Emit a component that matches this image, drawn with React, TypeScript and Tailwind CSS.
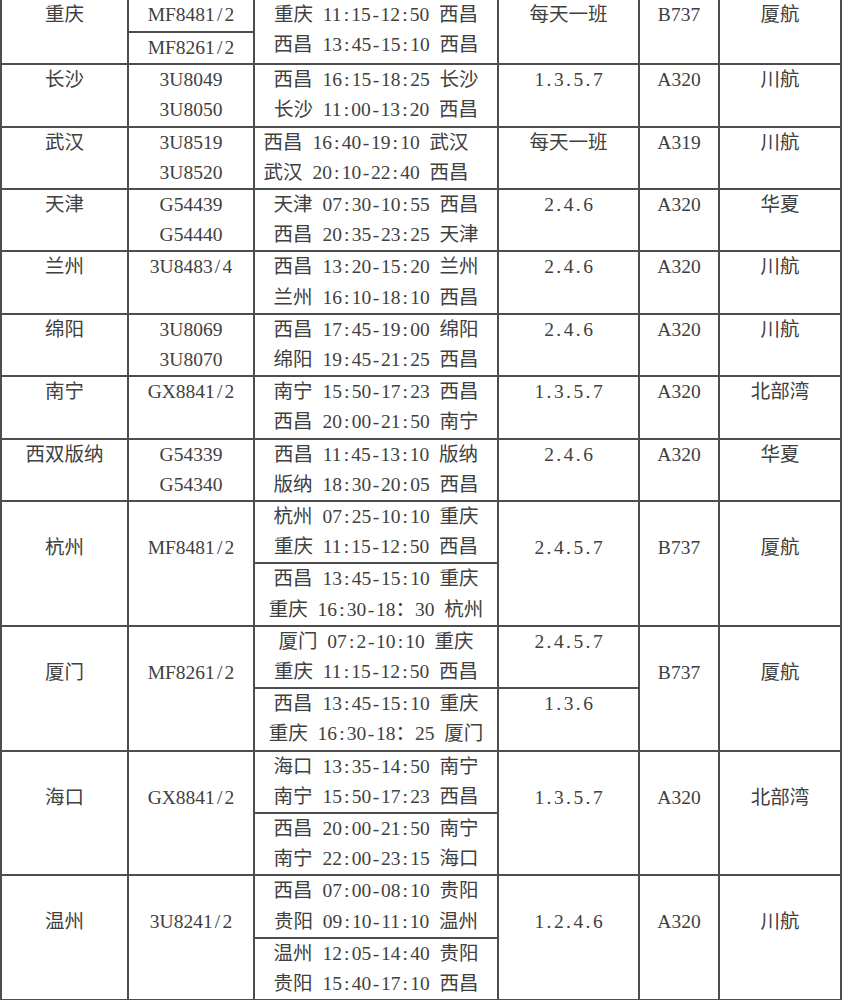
import React from "react";

type Simple = {
  city: string;
  codes: string[];
  route: string[];
  freq: string;
  plane: string;
  airline: string;
  shift?: boolean;
};

type Long = {
  city: string;
  code: string;
  legs: string[][];
  freq: string | string[];
  plane: string;
  airline: string;
};

const simpleRows: Simple[] = [
  {
    city: "长沙",
    codes: ["3U8049", "3U8050"],
    route: ["西昌 16:15-18:25 长沙", "长沙 11:00-13:20 西昌"],
    freq: "1.3.5.7",
    plane: "A320",
    airline: "川航",
  },
  {
    city: "武汉",
    codes: ["3U8519", "3U8520"],
    route: ["西昌 16:40-19:10 武汉", "武汉 20:10-22:40 西昌"],
    freq: "每天一班",
    plane: "A319",
    airline: "川航",
    shift: true,
  },
  {
    city: "天津",
    codes: ["G54439", "G54440"],
    route: ["天津 07:30-10:55 西昌", "西昌 20:35-23:25 天津"],
    freq: "2.4.6",
    plane: "A320",
    airline: "华夏",
  },
  {
    city: "兰州",
    codes: ["3U8483/4"],
    route: ["西昌 13:20-15:20 兰州", "兰州 16:10-18:10 西昌"],
    freq: "2.4.6",
    plane: "A320",
    airline: "川航",
  },
  {
    city: "绵阳",
    codes: ["3U8069", "3U8070"],
    route: ["西昌 17:45-19:00 绵阳", "绵阳 19:45-21:25 西昌"],
    freq: "2.4.6",
    plane: "A320",
    airline: "川航",
  },
  {
    city: "南宁",
    codes: ["GX8841/2"],
    route: ["南宁 15:50-17:23 西昌", "西昌 20:00-21:50 南宁"],
    freq: "1.3.5.7",
    plane: "A320",
    airline: "北部湾",
  },
  {
    city: "西双版纳",
    codes: ["G54339", "G54340"],
    route: ["西昌 11:45-13:10 版纳", "版纳 18:30-20:05 西昌"],
    freq: "2.4.6",
    plane: "A320",
    airline: "华夏",
  },
];

const longRows: Long[] = [
  {
    city: "杭州",
    code: "MF8481/2",
    legs: [
      ["杭州 07:25-10:10 重庆", "重庆 11:15-12:50 西昌"],
      ["西昌 13:45-15:10 重庆", "重庆 16:30-18：30 杭州"],
    ],
    freq: "2.4.5.7",
    plane: "B737",
    airline: "厦航",
  },
  {
    city: "厦门",
    code: "MF8261/2",
    legs: [
      ["厦门 07:2-10:10 重庆", "重庆 11:15-12:50 西昌"],
      ["西昌 13:45-15:10 重庆", "重庆 16:30-18：25 厦门"],
    ],
    freq: ["2.4.5.7", "1.3.6"],
    plane: "B737",
    airline: "厦航",
  },
  {
    city: "海口",
    code: "GX8841/2",
    legs: [
      ["海口 13:35-14:50 南宁", "南宁 15:50-17:23 西昌"],
      ["西昌 20:00-21:50 南宁", "南宁 22:00-23:15 海口"],
    ],
    freq: "1.3.5.7",
    plane: "A320",
    airline: "北部湾",
  },
  {
    city: "温州",
    code: "3U8241/2",
    legs: [
      ["西昌 07:00-08:10 贵阳", "贵阳 09:10-11:10 温州"],
      ["温州 12:05-14:40 贵阳", "贵阳 15:40-17:10 西昌"],
    ],
    freq: "1.2.4.6",
    plane: "A320",
    airline: "川航",
  },
];

// punctuation gets a fixed half-width box, like the Song typeface in the scan
const HALF = " :.-/";

function T({ s }: { s: string }) {
  return (
    <>
      {Array.from(s).map((c, i) =>
        HALF.includes(c) ? (
          <span key={i} className="inline-block w-[0.5em] text-center">
            {c === " " ? "\u00a0" : c}
          </span>
        ) : (
          <React.Fragment key={i}>{c}</React.Fragment>
        )
      )}
    </>
  );
}

function Lines({ lines }: { lines: string[] }) {
  return (
    <>
      {lines.map((l) => (
        <div key={l} className="whitespace-nowrap">
          <T s={l} />
        </div>
      ))}
    </>
  );
}

const cell = "border-2 border-[#4d4d4d] p-0 align-top text-center";
const mid = cell + " pt-[31px]";

export default function App() {
  return (
    <div className="min-h-screen bg-white">
      <table className="-mt-[2px] w-[840px] table-fixed border-collapse font-['Liberation_Serif','Noto_Sans_CJK_SC',serif] text-[19.5px] leading-[30.2px] text-[#404040]">
        <colgroup>
          <col className="w-[127px]" />
          <col className="w-[126px]" />
          <col className="w-[244px]" />
          <col className="w-[141px]" />
          <col className="w-[80px]" />
          <col className="w-[122px]" />
        </colgroup>
        <tbody>
          <tr className="h-[33px]">
            <td rowSpan={2} className={cell}>
              重庆
            </td>
            <td className={cell}>
              <T s="MF8481/2" />
            </td>
            <td rowSpan={2} className={cell}>
              <Lines lines={["重庆 11:15-12:50 西昌", "西昌 13:45-15:10 西昌"]} />
            </td>
            <td rowSpan={2} className={cell}>
              每天一班
            </td>
            <td rowSpan={2} className={cell}>
              <T s="B737" />
            </td>
            <td rowSpan={2} className={cell}>
              厦航
            </td>
          </tr>
          <tr className="h-[30.4px]">
            <td className={cell}>
              <T s="MF8261/2" />
            </td>
          </tr>

          {simpleRows.map((r) => (
            <tr key={r.city} className="h-[62.4px]">
              <td className={cell}>{r.city}</td>
              <td className={cell}>
                <Lines lines={r.codes} />
              </td>
              <td className={cell + (r.shift ? " pr-[20px]" : "")}>
                <Lines lines={r.route} />
              </td>
              <td className={cell}>
                <T s={r.freq} />
              </td>
              <td className={cell}>
                <T s={r.plane} />
              </td>
              <td className={cell}>{r.airline}</td>
            </tr>
          ))}

          {longRows.map((r) => {
            const split = Array.isArray(r.freq);
            return (
              <React.Fragment key={r.city}>
                <tr className="h-[62.4px]">
                  <td rowSpan={2} className={mid}>
                    {r.city}
                  </td>
                  <td rowSpan={2} className={mid}>
                    <T s={r.code} />
                  </td>
                  <td className={cell}>
                    <Lines lines={r.legs[0]} />
                  </td>
                  {split ? (
                    <td className={cell}>
                      <T s={r.freq[0]} />
                    </td>
                  ) : (
                    <td rowSpan={2} className={mid}>
                      <T s={r.freq as string} />
                    </td>
                  )}
                  <td rowSpan={2} className={mid}>
                    <T s={r.plane} />
                  </td>
                  <td rowSpan={2} className={mid}>
                    {r.airline}
                  </td>
                </tr>
                <tr className="h-[62.4px]">
                  <td className={cell}>
                    <Lines lines={r.legs[1]} />
                  </td>
                  {split ? (
                    <td className={cell}>
                      <T s={r.freq[1]} />
                    </td>
                  ) : null}
                </tr>
              </React.Fragment>
            );
          })}
        </tbody>
      </table>
    </div>
  );
}
